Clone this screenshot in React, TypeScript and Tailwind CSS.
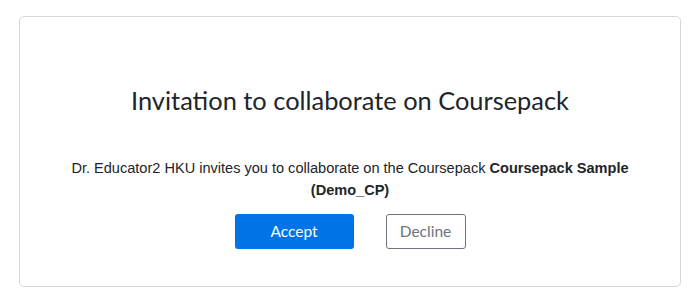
import React from "react";

export default function App() {
  return (
    <div className="w-[697px] h-[298px] bg-white pl-[19px] pr-[16px] pt-[16px]">
      <div className="h-[271px] rounded-[5px] border border-[#d3d8de] flex flex-col items-center pt-[66px]">
        <h1 className="text-[25.4px] leading-[34px] text-[#212529] font-['Lato',sans-serif] font-normal">
          Invitation to collaborate on Coursepack
        </h1>
        <p className="mt-[40px] w-[590px] text-center text-[14.55px] leading-[22px] text-[#212529] font-['Liberation_Sans',Arial,sans-serif]">
          Dr. Educator2 HKU invites you to collaborate on the Coursepack <b>Coursepack Sample (Demo_CP)</b>
        </p>
        <div className="mt-[13px] flex gap-[32px]">
          <button className="w-[119px] h-[35px] rounded-[3px] bg-[#0073e6] text-white text-[15.5px] font-['Lato',sans-serif]">
            Accept
          </button>
          <button className="w-[80px] h-[35px] rounded-[3px] border border-[#6c757d] bg-white text-[#6c757d] text-[15.5px] font-['Lato',sans-serif]">
            Decline
          </button>
        </div>
      </div>
    </div>
  );
}
